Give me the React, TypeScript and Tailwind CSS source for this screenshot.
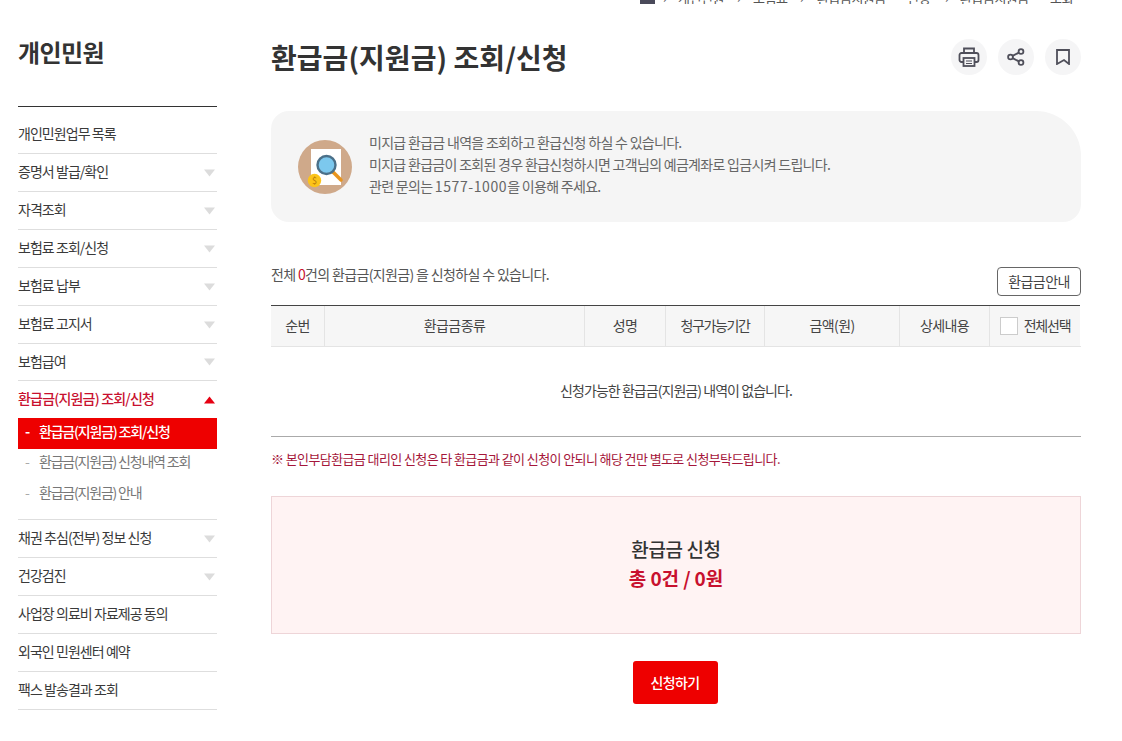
import React from "react";

const font = { fontFamily: '"Noto Sans CJK KR", "Noto Sans", sans-serif' };

function Tri({ up = false, red = false }: { up?: boolean; red?: boolean }) {
  return (
    <svg width="11" height="8" viewBox="0 0 11 8" className="shrink-0">
      <polygon points={up ? "5.5,0.5 11,7.5 0,7.5" : "0,0.5 11,0.5 5.5,7.5"} fill={red ? "#e60012" : "#dcdcdc"} />
    </svg>
  );
}

function Row({ label, arrow = true, h = "h-[38px]", first = false }: { label: string; arrow?: boolean; h?: string; first?: boolean }) {
  return (
    <div className={`${h} border-b border-[#dedede] flex items-center justify-between pr-[2px] text-[14px] tracking-[-0.95px] text-[#3a3a3a]`}>
      <span className={first ? "pt-[6px]" : "pb-[2px]"}>{label}</span>
      {arrow && <Tri />}
    </div>
  );
}

function Round({ children }: { children: React.ReactNode }) {
  return <div className="w-9 h-9 rounded-full bg-[#f5f5f6] flex items-center justify-center">{children}</div>;
}

function Th({ w, children, last = false }: { w: string; children: React.ReactNode; last?: boolean }) {
  return (
    <div className={`${w} h-full flex items-center justify-center pb-[2px] ${last ? "" : "border-r border-[#e4e4e4]"}`}>
      {children}
    </div>
  );
}

export default function App() {
  return (
    <div style={font} className="w-[1122px] h-[741px] bg-white overflow-hidden text-[#333]">
      <div className="h-[4px] overflow-hidden flex items-end pl-[640px] text-[13px] leading-[13px] text-[#555] tracking-[-0.5px]">
        <div className="w-[15px] h-[4px] bg-[#4a4a5a] shrink-0" />
        <span className="ml-[8px] w-[15px] shrink-0">›</span>
        <span className="w-[59px] shrink-0">개인민원</span>
        <span className="w-[16px] shrink-0">›</span>
        <span className="w-[47px] shrink-0">보험료</span>
        <span className="w-[17px] shrink-0">›</span>
        <span className="w-[90px] shrink-0">환급금지원금</span>
        <span className="w-[38px] shrink-0">신청</span>
        <span className="w-[15px] shrink-0">›</span>
        <span className="w-[90px] shrink-0">환급금지원금</span>
        <span className="shrink-0">조회</span>
      </div>
      <div className="flex pl-[18px] pr-[41px]">
        <aside className="w-[199px] shrink-0">
          <h2 className="mt-[31px] h-[71px] text-[24px] leading-[34px] font-bold tracking-[-0.6px] text-[#333]">개인민원</h2>
          <div className="border-t border-[#333]">
            <Row label="개인민원업무 목록" arrow={false} h="h-[47px]" first />
            <Row label="증명서 발급/확인" />
            <Row label="자격조회" />
            <Row label="보험료 조회/신청" />
            <Row label="보험료 납부" />
            <Row label="보험료 고지서" />
            <Row label="보험급여" h="h-[37px]" />
            <div className="h-[37px] flex items-center justify-between pr-[2px] text-[14px] tracking-[-0.8px] font-medium text-[#c8102e]">
              <span className="pb-[2px]">환급금(지원금) 조회/신청</span>
              <Tri up red />
            </div>
            <div className="border-b border-[#dedede] pb-[8px] text-[14px] tracking-[-1.2px]">
              <div className="h-[31px] bg-[#ee0000] text-white font-medium flex items-center pl-[7px] gap-[7px] pb-[5px]">
                <span className="w-[7px] font-bold">-</span><span>환급금(지원금) 조회/신청</span>
              </div>
              <div className="h-[31px] text-[#777] flex items-center pl-[7px] gap-[7px] pb-[7px]">
                <span className="w-[7px] text-[#aaa]">-</span><span>환급금(지원금) 신청내역 조회</span>
              </div>
              <div className="h-[31px] text-[#777] flex items-center pl-[7px] gap-[7px] pb-[7px]">
                <span className="w-[7px] text-[#aaa]">-</span><span>환급금(지원금) 안내</span>
              </div>
            </div>
            <Row label="채권 추심(전부) 정보 신청" />
            <Row label="건강검진" />
            <Row label="사업장 의료비 자료제공 동의" arrow={false} />
            <Row label="외국인 민원센터 예약" arrow={false} />
            <Row label="팩스 발송결과 조회" arrow={false} />
          </div>
        </aside>
        <main className="ml-[54px] w-[810px]">
          <div className="mt-[35px] h-[72px] flex justify-between">
            <h1 className="text-[28px] leading-[36px] font-bold tracking-[0.05px] text-[#333]">환급금(지원금) 조회/신청</h1>
            <div className="flex gap-[11px]">
              <Round>
                <svg width="22" height="22" viewBox="0 0 22 22" fill="none" stroke="#4f4f5a" strokeWidth="1.8">
                  <path d="M6 7V2.5h10V7" />
                  <rect x="1.5" y="7" width="19" height="9" rx="2" />
                  <rect x="5.5" y="12" width="11" height="8" fill="#f5f5f6" />
                  <path d="M8 15h6M8 17.5h6" strokeWidth="1.2" />
                </svg>
              </Round>
              <Round>
                <svg width="18" height="18" viewBox="0 0 18 18" fill="none" stroke="#4f4f5a" strokeWidth="1.8">
                  <circle cx="3.5" cy="9" r="2.4" />
                  <circle cx="14" cy="3.5" r="2.4" />
                  <circle cx="14" cy="14.5" r="2.4" />
                  <path d="M5.6 7.9 11.9 4.6M5.6 10.1l6.3 3.3" />
                </svg>
              </Round>
              <Round>
                <svg width="14" height="16" viewBox="0 0 14 16" fill="none" stroke="#4f4f5a" strokeWidth="1.8">
                  <path d="M1 1h12v14l-5-4-7 4z" />
                </svg>
              </Round>
            </div>
          </div>
          <div className="h-[111px] bg-[#f5f5f5] rounded-tl-[18px] rounded-bl-[18px] rounded-br-[18px] rounded-tr-[45px] flex items-center pl-[27px]">
            <svg width="54" height="54" viewBox="0 0 54 54" className="shrink-0">
              <circle cx="27" cy="27" r="27" fill="#cfa98a" />
              <rect x="13" y="9" width="30" height="36" fill="#fff" />
              <path d="M35 32l8 8" stroke="#e8951f" strokeWidth="3.5" strokeLinecap="round" />
              <circle cx="28.5" cy="25" r="9" fill="#7cc8ee" stroke="#4b7089" strokeWidth="2.4" />
              <circle cx="16.5" cy="40.5" r="6.7" fill="#fcc419" />
              <text x="16.5" y="44" fontSize="9" textAnchor="middle" fill="#b5790a">$</text>
            </svg>
            <div className="ml-[17px] pb-[6px] text-[14px] leading-[22px] tracking-[-0.7px] text-[#666]">
              <p>미지급 환급금 내역을 조회하고 환급신청 하실 수 있습니다.</p>
              <p>미지급 환급금이 조회된 경우 환급신청하시면 고객님의 예금계좌로 입금시켜 드립니다.</p>
              <p>관련 문의는 <span className="tracking-[0.6px]">1577-1000</span>을 이용해 주세요.</p>
            </div>
          </div>
          <div className="mt-[45px] h-[38px] flex justify-between items-start">
            <p className="text-[14px] leading-[14px] tracking-[-0.65px] text-[#555]">
              전체 <span className="text-[#c8102e]">0</span>건의 환급금(지원금) 을 신청하실 수 있습니다.
            </p>
            <button className="w-[84px] h-[29px] border border-[#666] rounded-[4px] text-[14px] tracking-[-0.6px] text-[#444] bg-white">환급금안내</button>
          </div>
          <div className="h-[41px] w-[809px] border-t border-[#444] bg-[#f6f6f6] flex text-[14px] tracking-[-0.6px] text-[#444]">
            <Th w="w-[54px]">순번</Th>
            <Th w="w-[260px]">환급금종류</Th>
            <Th w="w-[81px]">성명</Th>
            <Th w="w-[99px]"><span className="tracking-[-1.4px]">청구가능기간</span></Th>
            <Th w="w-[135px]">금액(원)</Th>
            <Th w="w-[90px]">상세내용</Th>
            <Th w="w-[90px]" last>
              <span className="w-[18px] h-[18px] border border-[#ccc] bg-white mr-[6px] mt-[2px]" /><span className="tracking-[-1.2px]">전체선택</span>
            </Th>
          </div>
          <div className="h-[91px] border-t border-[#e4e4e4] border-b border-b-[#aaa] flex items-center justify-center text-[14px] tracking-[-0.95px] text-[#444]">
            <span className="pb-[3px]">신청가능한 환급금(지원금) 내역이 없습니다.</span>
          </div>
          <p className="mt-[12px] h-[47px] text-[13px] leading-[20px] tracking-[-0.6px] text-[#a5163a]">※ 본인부담환급금 대리인 신청은 타 환급금과 같이 신청이 안되니 해당 건만 별도로 신청부탁드립니다.</p>
          <div className="h-[138px] border border-[#eed5d8] bg-[#fff3f3] flex flex-col items-center justify-center pb-[5px]">
            <div className="text-[19px] leading-[29px] font-medium tracking-[-0.4px] text-[#333]">환급금 신청</div>
            <div className="text-[19px] leading-[29px] font-bold tracking-[-0.1px] text-[#c8102e]">총 0건 / 0원</div>
          </div>
          <div className="mt-[27px] flex justify-center pr-[2px]">
            <button className="w-[85px] h-[43px] rounded-[3px] bg-[#ee0000] text-white text-[14px] font-medium tracking-[-0.6px]">신청하기</button>
          </div>
        </main>
      </div>
    </div>
  );
}
